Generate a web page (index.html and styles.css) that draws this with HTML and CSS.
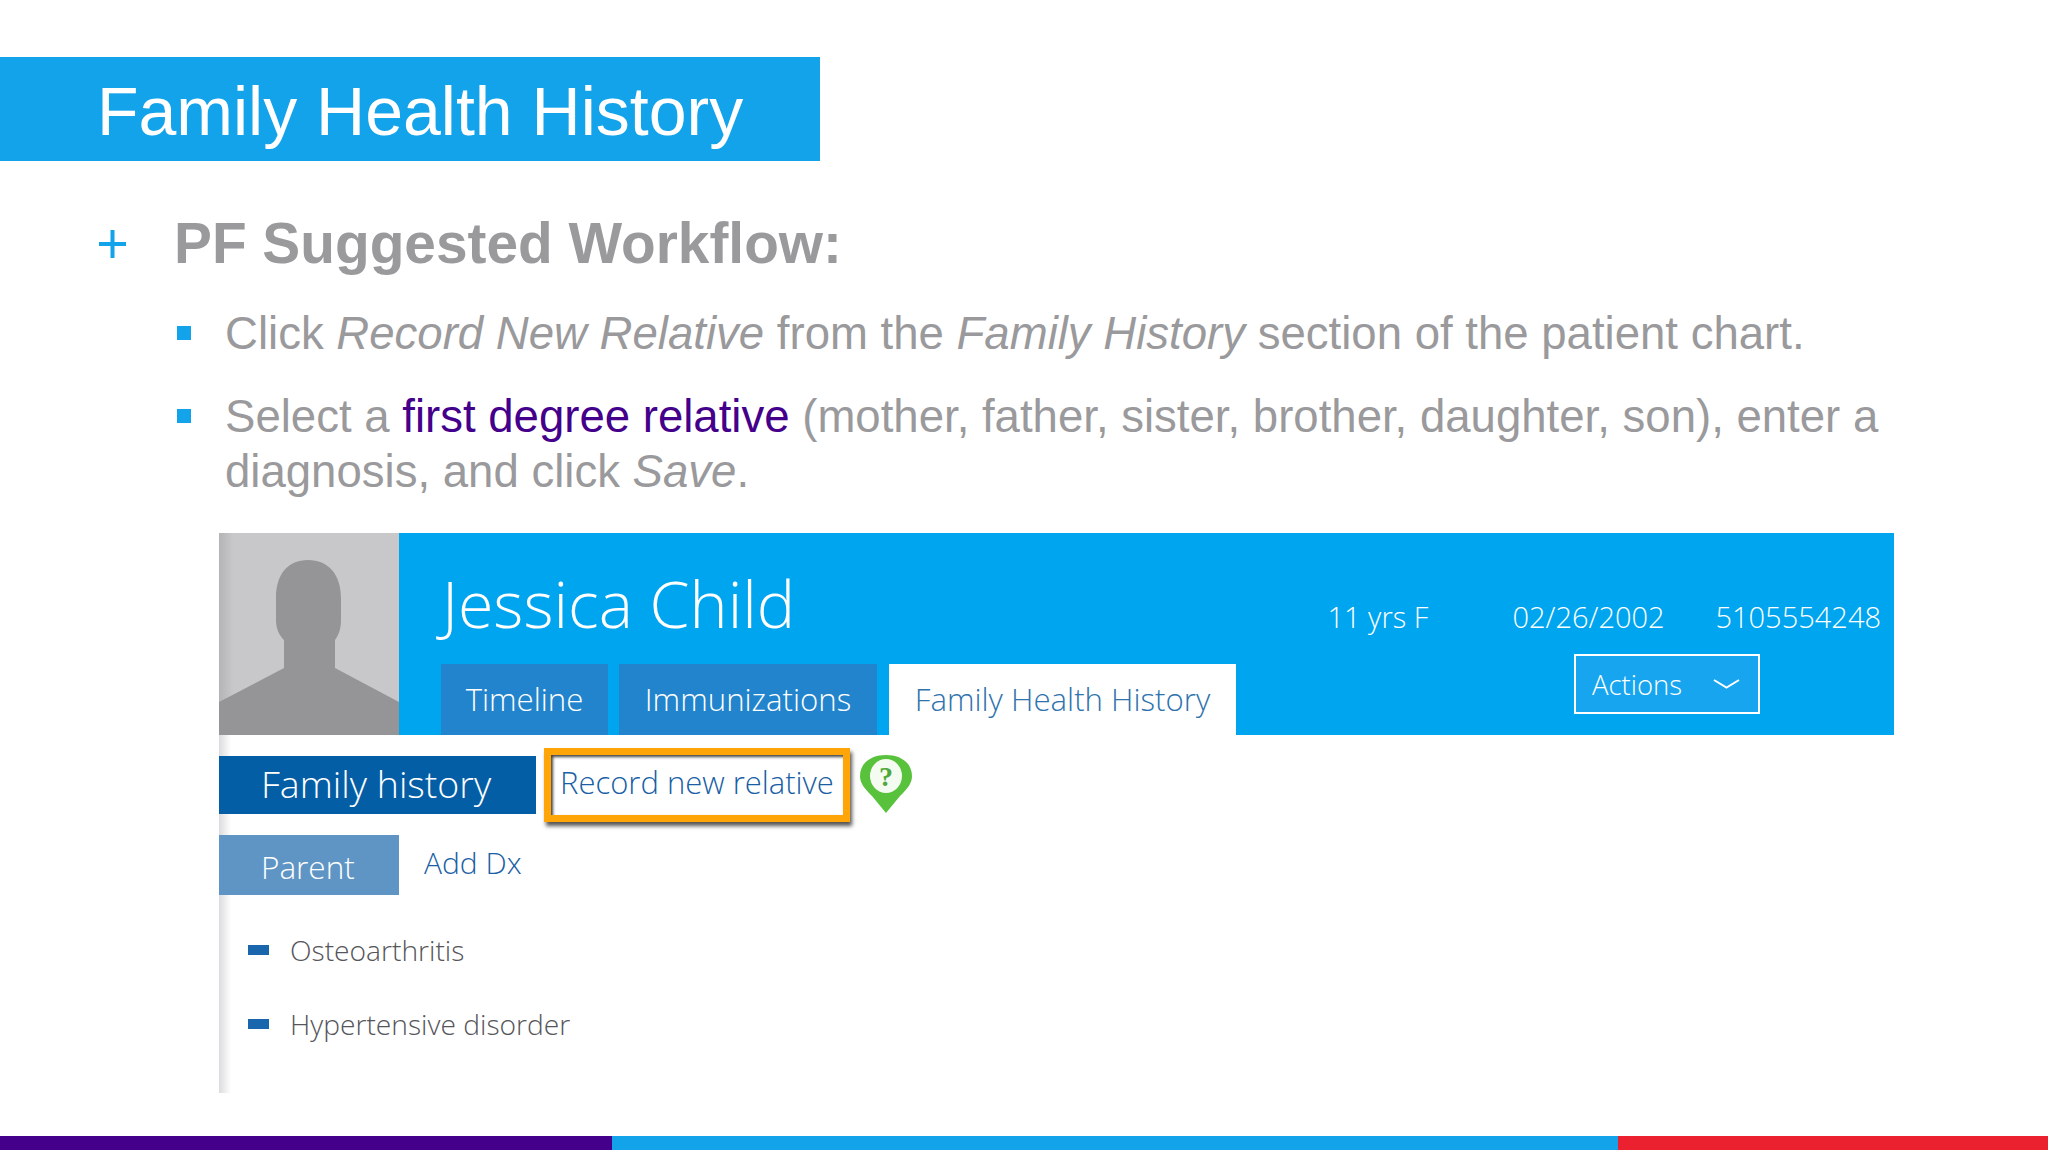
FILE: index.html
```html
<!DOCTYPE html>
<html lang="en">

<head>
    <meta charset="UTF-8">
    <title>Family Health History</title>
    <link rel="stylesheet" href="styles.css">
</head>

<body>
    <div class="slide">
        <h1 class="slide-title">Family Health History</h1>

        <div class="workflow">
            <svg class="plus" width="27" height="28" viewBox="0 0 27 28"><path d="M0 12h27v4H0zM11.500 0h4v28h-4z" fill="#13a3ea"/></svg>
            <h2>PF Suggested Workflow:</h2>
        </div>

        <ul class="steps">
            <li>Click <em>Record New Relative</em> from the <em>Family History</em> section of the patient chart.</li>
            <li>Select a <span class="purple">first degree relative</span> (mother, father, sister, brother, daughter, son), enter a diagnosis, and click <em>Save</em>.</li>
        </ul>

        <div class="chart">
            <div class="chart-header">
                <svg class="avatar" width="180" height="202" viewBox="0 0 180 202">
                    <defs>
                        <linearGradient id="avatarBg" x1="0" x2="1" y1="0" y2="0">
                            <stop offset="0" stop-color="#b4b3b5"/>
                            <stop offset="0.08" stop-color="#c8c7ca"/>
                        </linearGradient>
                    </defs>
                    <rect width="180" height="202" fill="url(#avatarBg)"/>
                    <path d="M89 27c20 0 33 14 33 38v22c0 10-3 16-6 20v28l64 34v33H0v-33l65-34v-28c-4-4-8-10-8-20V65c0-24 12-38 32-38z" fill="#959497"/>
                </svg>
                <div class="patient">
                    <div class="patient-top">
                        <div class="patient-name">Jessica Child</div>
                        <div class="patient-meta">
                            <span class="meta-age">11 yrs F</span>
                            <span class="meta-dob">02/26/2002</span>
                            <span>5105554248</span>
                        </div>
                    </div>
                    <div class="patient-bottom">
                        <div class="tabs">
                            <div class="tab tab-timeline">Timeline</div>
                            <div class="tab tab-imm">Immunizations</div>
                            <div class="tab tab-active">Family Health History</div>
                        </div>
                        <div class="actions">
                            Actions
                            <svg width="27" height="10" viewBox="0 0 27 10"><path d="M1 1l12.500 7.500L26 1" fill="none" stroke="#fff" stroke-width="2"/></svg>
                        </div>
                    </div>
                </div>
            </div>

            <div class="history-row">
                <div class="history-label">Family history</div>
                <div class="record-box">Record new relative</div>
                <svg class="pin" width="52" height="60" viewBox="0 0 52 60">
                    <path d="M26 58L12 41C4 33 0 28 0 21 0 8 11 0 26 0s26 8 26 21c0 7-4 12-12 20z" fill="#58c23c"/>
                    <ellipse cx="26" cy="21" rx="16" ry="17" fill="#f4fbf0"/>
                    <text x="26" y="31" text-anchor="middle" class="pin-mark">?</text>
                </svg>
            </div>

            <div class="parent-row">
                <div class="parent-label">Parent</div>
                <div class="add-dx">Add Dx</div>
            </div>

            <div class="dx-list">
                <div class="dx"><span class="dash"></span>Osteoarthritis</div>
                <div class="dx"><span class="dash"></span>Hypertensive disorder</div>
            </div>
        </div>

        <div class="stripe">
            <div class="stripe-purple"></div>
            <div class="stripe-blue"></div>
            <div class="stripe-red"></div>
        </div>
    </div>
</body>

</html>
```

FILE: styles.css
```css
* {
    padding: 0;
    margin: 0;
    box-sizing: border-box;
}

body {
    background: #fff;
    font-family: "Liberation Sans", Arial, sans-serif;
    overflow: hidden;
}

.slide {
    width: 2048px;
    height: 1152px;
    display: flex;
    flex-direction: column;
    padding-top: 57px;
    padding-bottom: 2px;
}

.slide-title {
    width: 820px;
    height: 104px;
    padding-left: 97px;
    background: #13a3ea;
    color: #fff;
    font-size: 68px;
    font-weight: 400;
    line-height: 108px;
}

.workflow {
    display: flex;
    align-items: center;
    height: 60px;
    margin-top: 53px;
    padding-left: 99px;
}

.plus {
    margin-right: 48px;
}

h2 {
    color: #9a999c;
    font-size: 56.800px;
    font-weight: 700;
    line-height: 60px;
}

.steps {
    list-style: none;
    margin-top: 32px;
    padding-left: 225px;
    width: 1900px;
    color: #9a999c;
    font-size: 45.550px;
    line-height: 55px;
}

.steps li {
    position: relative;
    margin-bottom: 28px;
}

.steps li::before {
    content: "";
    position: absolute;
    left: -48px;
    top: 20px;
    width: 14px;
    height: 14px;
    background: #13a3ea;
}

.purple {
    color: #44008b;
}

/* pasted chart picture */
.chart {
    margin-left: 219px;
    margin-top: 6px;
    width: 1675px;
    height: 560px;
    background: linear-gradient(to right, #dcdcde, #fff 12px);
    font-family: "Open Sans", sans-serif;
    font-weight: 300;
}

.chart-header {
    display: flex;
    height: 202px;
}

.avatar {
    flex: none;
}

.patient {
    flex: 1;
    background: #00a5f0;
    color: #fff;
    display: flex;
    flex-direction: column;
}

.patient-top {
    display: flex;
    justify-content: space-between;
    height: 121px;
}

.patient-name {
    padding-left: 43px;
    padding-top: 27px;
    font-size: 64.500px;
    line-height: 87px;
}

.patient-meta {
    display: flex;
    padding-top: 64px;
    padding-right: 13px;
    font-size: 29px;
    line-height: 40px;
}

.meta-age {
    width: 185px;
}

.meta-dob {
    width: 203px;
}

.patient-bottom {
    display: flex;
    flex: 1;
}

.tabs {
    display: flex;
    align-items: flex-end;
    padding-left: 42px;
    gap: 11px;
}

.tab {
    height: 71px;
    padding-top: 14px;
    font-size: 31.200px;
    line-height: 42px;
    text-align: center;
    background: #2284cc;
}

.tab-timeline {
    width: 167px;
}

.tab-imm {
    width: 258px;
}

.tab-active {
    width: 347px;
    margin-left: 1px;
    background: #fff;
    color: #2f73ad;
}

.actions {
    display: flex;
    align-items: center;
    justify-content: space-between;
    width: 186px;
    height: 60px;
    margin-left: 338px;
    padding: 0 18px 0 16px;
    border: 2px solid #fff;
    background: #16a5ee;
    font-size: 27.500px;
}

.history-row {
    display: flex;
    align-items: center;
    height: 74px;
    margin-top: 13px;
}

.history-label {
    width: 317px;
    height: 58px;
    padding-left: 42px;
    background: #045ea5;
    color: #fff;
    font-size: 37.500px;
    line-height: 56px;
}

.record-box {
    width: 306px;
    height: 74px;
    margin-left: 8px;
    padding-left: 9px;
    background: #fff;
    border: 7px solid #ffa508;
    box-shadow: inset 2px 2px 3px #444, 2px 4px 4px #555;
    color: #1a5fa5;
    font-size: 31px;
    line-height: 54px;
}

.pin {
    margin-left: 10px;
    margin-top: -1px;
}

.pin-mark {
    fill: #4fa83a;
    font-family: "Liberation Serif", serif;
    font-size: 28px;
    font-weight: 700;
}

.parent-row {
    display: flex;
    margin-top: 13px;
}

.parent-label {
    width: 180px;
    height: 60px;
    padding-left: 42px;
    background: #5f95c4;
    color: #fff;
    font-size: 31.500px;
    line-height: 64px;
}

.add-dx {
    margin-left: 25px;
    color: #1a5fa5;
    font-size: 30px;
    line-height: 56px;
}

.dx-list {
    display: flex;
    flex-direction: column;
    gap: 33px;
    margin-top: 34px;
    padding-left: 29px;
}

.dx {
    display: flex;
    align-items: center;
    height: 41px;
    color: #55555a;
    font-size: 28.200px;
}

.dash {
    width: 21px;
    height: 10px;
    margin-right: 21px;
    margin-top: 1px;
    background: #1a66ad;
}

.stripe {
    display: flex;
    height: 14px;
    margin-top: auto;
}

.stripe-purple {
    width: 612px;
    background: #44008b;
}

.stripe-blue {
    width: 1006px;
    background: #13a3ea;
}

.stripe-red {
    flex: 1;
    background: #ec2130;
}
```
